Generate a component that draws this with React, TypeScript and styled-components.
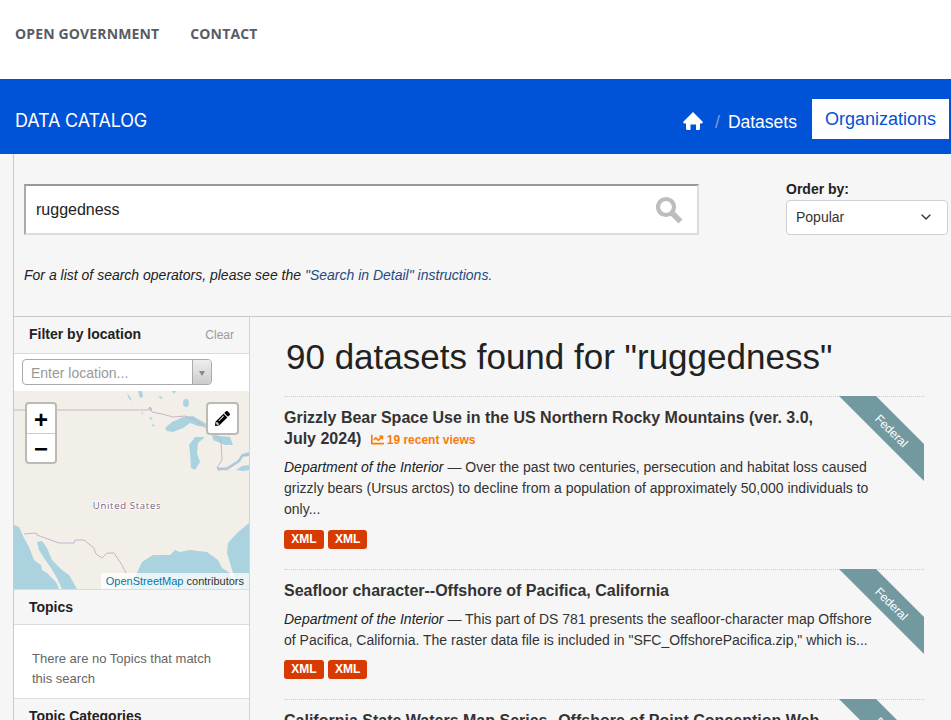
import React from 'react'
import styled, { createGlobalStyle } from 'styled-components'
import { FaPencilAlt, FaChartLine } from 'react-icons/fa'
import { FiChevronDown } from 'react-icons/fi'

const Global = createGlobalStyle`
  html, body {
    margin: 0;
    height: 720px;
    overflow: hidden;
    background: #f6f6f6;
    font-family: 'Liberation Sans', Arial, sans-serif;
    color: #333;
  }
  a { text-decoration: none; }
`

const TopBar = styled.div`
  height: 79px;
  background: #fff;
  display: flex;
  align-items: center;
  gap: 31px;
  padding: 0 15px 12px;
  box-sizing: border-box;
  a {
    font-family: 'Open Sans', sans-serif;
    font-weight: 700;
    font-size: 14px;
    letter-spacing: 0.14px;
    color: #575c66;
  }
`

const BlueBar = styled.div`
  height: 75px;
  background: #0052d6;
  display: flex;
  align-items: center;
  justify-content: space-between;
  padding: 0 2px 0 15px;
`

const Brand = styled.a`
  font-family: 'Inter', sans-serif;
  font-size: 18px;
  letter-spacing: -0.15px;
  color: #fff;
  margin-top: 7px;
`

const Crumbs = styled.div`
  display: flex;
  align-items: center;
  color: #fff;
  font-size: 18px;
  margin-top: 7px;
  svg {
    margin-top: 2px;
  }
`

const Sep = styled.span`
  color: #7f9fd8;
  margin: 4px 8px 0 12px;
  font-size: 17.5px;
`

const Crumb = styled.span`
  font-size: 17.5px;
  margin-top: 4px;
`

const ActiveCrumb = styled.a`
  background: #fff;
  color: #0052d6;
  height: 40px;
  line-height: 40px;
  margin-left: 15px;
  padding: 0 13px;
  transform: translateY(-1px);
`

const Page = styled.div`
  margin-left: 13px;
  border-left: 1px solid #c9c9c9;
`

const SearchArea = styled.div`
  height: 162px;
  box-sizing: border-box;
  padding: 30px 3px 0 10px;
  display: flex;
  flex-direction: column;
`

const SearchRow = styled.div`
  display: flex;
  justify-content: space-between;
  align-items: flex-end;
  height: 51px;
`

const SearchBox = styled.div`
  width: 675px;
  height: 51px;
  box-sizing: border-box;
  background: #fff;
  border: 2px solid #dcdcdc;
  border-top-color: #999;
  border-left-color: #aaa;
  display: flex;
  align-items: center;
  justify-content: space-between;
  padding: 0 14px 0 10px;
  font-size: 16px;
  color: #222;
  line-height: 47px;
`

const OrderBy = styled.div`
  width: 162px;
  label {
    display: block;
    font-size: 14px;
    font-weight: 700;
    color: #222;
    line-height: 16px;
    margin-bottom: 3px;
  }
`

const SelectBox = styled.div`
  height: 35px;
  box-sizing: border-box;
  background: #fff;
  border: 1px solid #cdd0d6;
  border-radius: 4px;
  display: flex;
  align-items: center;
  justify-content: space-between;
  padding: 0 13px 2px 9px;
  font-size: 14px;
  color: #333;
`

const Hint = styled.p`
  margin: 32px 0 0;
  font-size: 14px;
  font-style: italic;
  color: #222;
  line-height: 16px;
  a { color: #1f4a85; }
`

const Columns = styled.div`
  display: grid;
  grid-template-columns: 236px 1fr;
  border-top: 1px solid #c9c9c9;
`

const Sidebar = styled.aside`
  border-right: 1px solid #d4d4d4;
  height: 403px;
  overflow: hidden;
`

const PanelHead = styled.div<{ $h: number }>`
  height: ${p => p.$h}px;
  box-sizing: border-box;
  padding: 0 15px;
  display: flex;
  justify-content: space-between;
  align-items: center;
  border-bottom: 1px solid #dcdcdc;
  font-size: 14px;
  font-weight: 700;
  color: #222;
  small {
    font-size: 12px;
    font-weight: 400;
    color: #9a9a9a;
    margin-top: 2px;
  }
`

const FilterHead = styled(PanelHead)`
  padding-bottom: 2px;
`

const LocationRow = styled.div`
  height: 37px;
  box-sizing: border-box;
  padding: 5px 8px;
  background: #fff;
`

const LocationInput = styled.div`
  width: 190px;
  height: 26px;
  box-sizing: border-box;
  border: 1px solid #aaa;
  border-radius: 4px;
  display: flex;
  align-items: center;
  justify-content: space-between;
  font-size: 14px;
  color: #999;
  padding-left: 8px;
  background: #fff;
  overflow: hidden;
  span:first-child {
    margin-top: 2px;
  }
`

const DropCaret = styled.span`
  width: 18px;
  height: 100%;
  border-left: 1px solid #aaa;
  background: linear-gradient(#eee, #ccc);
  display: flex;
  align-items: center;
  justify-content: center;
  &::after {
    content: '';
    margin-top: 3px;
    border: 3.5px solid transparent;
    border-top: 5px solid #888;
    border-bottom: 0;
  }
`

const MapPane = styled.div`
  position: relative;
  height: 199px;
  background: #f2efe9;
  overflow: hidden;
  border-bottom: 1px solid #dcdcdc;
  box-sizing: border-box;
  svg.base {
    display: block;
  }
`

const ZoomBox = styled.div`
  position: absolute;
  left: 11px;
  top: 11px;
  width: 32px;
  border-radius: 4px;
  background: #fff;
  border: 2px solid #bdb9b3;
  box-sizing: border-box;
  overflow: hidden;
`

const ZoomBtn = styled.div`
  height: 29px;
  box-sizing: border-box;
  padding-top: 2px;
  display: flex;
  align-items: center;
  justify-content: center;
  font-size: 24px;
  font-weight: 700;
  color: #000;
  & + & { border-top: 1px solid #ccc; }
`

const DrawBtn = styled.div`
  position: absolute;
  left: 192px;
  top: 11px;
  width: 33px;
  height: 33px;
  box-sizing: border-box;
  background: #fff;
  border: 2px solid #bdb9b3;
  border-radius: 4px;
  display: flex;
  align-items: center;
  justify-content: center;
  color: #000;
  font-size: 15px;
`

const Attribution = styled.div`
  position: absolute;
  right: 0;
  bottom: 0;
  height: 16px;
  line-height: 16px;
  padding: 0 5px;
  background: rgba(255, 255, 255, 0.75);
  font-size: 11px;
  color: #333;
  a { color: #0078a8; }
`

const EmptyNote = styled.p`
  margin: 0;
  height: 74px;
  box-sizing: border-box;
  background: #fff;
  border-bottom: 1px solid #dcdcdc;
  padding: 24px 18px 0;
  font-size: 13px;
  line-height: 20px;
  color: #666;
`

const Results = styled.main`
  padding: 0 27px 0 34px;
  height: 403px;
  overflow: hidden;
`

const Heading = styled.h1`
  margin: 0 0 0 2px;
  font-size: 35px;
  font-weight: 400;
  line-height: 79px;
  color: #222;
`

const Item = styled.article<{ $h: number }>`
  position: relative;
  height: ${p => p.$h}px;
  box-sizing: border-box;
  border-top: 1px dotted #ccc;
  padding-top: 10px;
`

const ItemTitle = styled.h3`
  margin: 0;
  width: 560px;
  font-size: 16px;
  line-height: 21px;
  font-weight: 700;
  color: #333;
`

const Views = styled.span`
  margin-left: 6px;
  font-size: 12px;
  line-height: 12px;
  color: #f97b0a;
  svg {
    vertical-align: -2px;
    margin-right: 3px;
  }
`

const Desc = styled.p`
  margin: 8px 0 0;
  width: 590px;
  font-size: 14px;
  line-height: 21px;
  color: #333;
  em { color: #222; }
`

const Badges = styled.div<{ $mt: number }>`
  display: flex;
  gap: 4px;
  margin-top: ${p => p.$mt}px;
`

const Badge = styled.span`
  background: #d83b01;
  color: #fff;
  font-size: 12px;
  font-weight: 700;
  height: 19px;
  line-height: 19px;
  padding: 0 7.2px;
  border-radius: 3px;
`

const Ribbon = styled.div`
  position: absolute;
  top: -1px;
  right: 0;
  width: 85px;
  height: 85px;
  background: #72999f;
  clip-path: polygon(0 0, 37px 0, 85px 48px, 85px 85px);
  span {
    position: absolute;
    left: 32px;
    top: 28px;
    transform: rotate(45deg);
    font-size: 12px;
    color: #fff;
  }
`

const HomeIcon = () => (
  <svg width="20" height="18" viewBox="0 0 20 18" fill="#fff">
    <path d="M10 0 L20 10 L19 11.5 H17 V16.5 Q17 18 15.5 18 H13 V12.5 H7.5 V18 H4.5 Q3 18 3 16.5 V11.5 H1 L0 10 Z" />
  </svg>
)

const SearchIcon = () => (
  <svg width="27" height="28" viewBox="0 0 27 28" fill="none" stroke="#bdbdbd">
    <circle cx="10" cy="11" r="8" strokeWidth="4.2" />
    <path d="M16 17 L24.5 25.5" strokeWidth="5.6" />
  </svg>
)

// drawn in page coordinates so the shapes can be read straight off the screenshot
const BaseMap = () => (
  <svg className="base" width="235" height="198" viewBox="14 391 235 198">
    <g fill="#aad3df">
      <path d="M165 428l7-6 11-5 10-1 12 7 3 4-10-1-8-3-7 5-10 4-6-1z" />
      <ellipse cx="186" cy="403" rx="3" ry="4" />
      <path d="M138 391h4l1 6-3 1zM158 396l5 1-2 2zM172 391h4l-2 3zM149 417l4 1-2 2zM152 424l3 1-2 2zM141 412l3 1-2 1zM127 393l3 4 2 4-3-2z" />
      <path d="M149 407l3 1-1 3-2-1z" />
      <path d="M195 437h10l-7 6-1 10 3 9-5 8-4-2-1-15-1-8z" />
      <path d="M212 435l18 2 3 8h-8l-5-2-7-3z" />
      <path d="M217 468l10-1 11-7 4-6 7-2v4l-6 1-3 5-12 7-10 2z" />
      <path d="M236 470l6-4 7-1v5l-6 1z" />
      <path d="M14 525l5 2 5 11 5 9 5 13 7 5 1 5 5 3 9 9 3 7H14z" />
      <path d="M37 542l5-1 5 7 5 12 10 10 7 5 8 14H62l-5-11-6-10-7-10-5-8z" />
      <path d="M134 580l3-7 5-11 11-7h17l5-5 5 2 10-2 17 2 11 8 4 8 8 5 3 16H130z" />
      <path d="M249 523l-12 10-9 10-1 10 3 10 3 10 7 16h9z" />
    </g>
    <g fill="none" stroke="#c4adc6" strokeWidth="0.9">
      <path d="M14 410h134l2-3 2 5 10 2 11 3 12-1 10 4 18 13 8 7 1 20-5 8 10 2 11-8 4-7h7" />
      <path d="M24 534l12-1 1 2 22 8h15l1-3h9l10 8 2 6 6 4 5-5h7l8 12 4 8" />
    </g>
    <text
      x="127"
      y="509"
      textAnchor="middle"
      fontFamily="'Open Sans', sans-serif"
      fontSize="9.5"
      letterSpacing="0.7"
      fill="#7a5d7e"
      stroke="#fff"
      strokeWidth="1.5"
      paintOrder="stroke"
    >
      United States
    </text>
  </svg>
)

const App = () => (
  <>
    <Global />
    <TopBar>
      <a href="#">OPEN GOVERNMENT</a>
      <a href="#">CONTACT</a>
    </TopBar>
    <BlueBar>
      <Brand href="#">DATA CATALOG</Brand>
      <Crumbs>
        <HomeIcon />
        <Sep>/</Sep>
        <Crumb>Datasets</Crumb>
        <ActiveCrumb href="#">Organizations</ActiveCrumb>
      </Crumbs>
    </BlueBar>
    <Page>
      <SearchArea>
        <SearchRow>
          <SearchBox>
            ruggedness
            <SearchIcon />
          </SearchBox>
          <OrderBy>
            <label>Order by:</label>
            <SelectBox>
              Popular
              <FiChevronDown size={16} color="#333" />
            </SelectBox>
          </OrderBy>
        </SearchRow>
        <Hint>
          For a list of search operators, please see the <a href="#">"Search in Detail" instructions.</a>
        </Hint>
      </SearchArea>
      <Columns>
        <Sidebar>
          <FilterHead $h={37}>
            Filter by location
            <small>Clear</small>
          </FilterHead>
          <LocationRow>
            <LocationInput>
              <span>Enter location...</span>
              <DropCaret />
            </LocationInput>
          </LocationRow>
          <MapPane>
            <BaseMap />
            <ZoomBox>
              <ZoomBtn>+</ZoomBtn>
              <ZoomBtn>−</ZoomBtn>
            </ZoomBox>
            <DrawBtn>
              <FaPencilAlt />
            </DrawBtn>
            <Attribution>
              <a href="#">OpenStreetMap</a> contributors
            </Attribution>
          </MapPane>
          <PanelHead $h={35}>Topics</PanelHead>
          <EmptyNote>There are no Topics that match this search</EmptyNote>
          <PanelHead $h={35}>Topic Categories</PanelHead>
        </Sidebar>
        <Results>
          <Heading>90 datasets found for "ruggedness"</Heading>
          <Item $h={173}>
            <Ribbon>
              <span>Federal</span>
            </Ribbon>
            <ItemTitle>
              Grizzly Bear Space Use in the US Northern Rocky Mountains (ver. 3.0, July 2024)
              <Views>
                {' '}
                <FaChartLine size={13} />
                19 recent views
              </Views>
            </ItemTitle>
            <Desc>
              <em>Department of the Interior</em> — Over the past two centuries, persecution and habitat loss caused
              grizzly bears (Ursus arctos) to decline from a population of approximately 50,000 individuals to only...
            </Desc>
            <Badges $mt={10}>
              <Badge>XML</Badge>
              <Badge>XML</Badge>
            </Badges>
          </Item>
          <Item $h={130}>
            <Ribbon>
              <span>Federal</span>
            </Ribbon>
            <ItemTitle>Seafloor character--Offshore of Pacifica, California</ItemTitle>
            <Desc>
              <em>Department of the Interior</em> — This part of DS 781 presents the seafloor-character map Offshore of
              Pacifica, California. The raster data file is included in "SFC_OffshorePacifica.zip," which is...
            </Desc>
            <Badges $mt={9}>
              <Badge>XML</Badge>
              <Badge>XML</Badge>
            </Badges>
          </Item>
          <Item $h={60}>
            <Ribbon>
              <span>Federal</span>
            </Ribbon>
            <ItemTitle>California State Waters Map Series--Offshore of Point Conception Web Services</ItemTitle>
          </Item>
        </Results>
      </Columns>
    </Page>
  </>
)

export default App
